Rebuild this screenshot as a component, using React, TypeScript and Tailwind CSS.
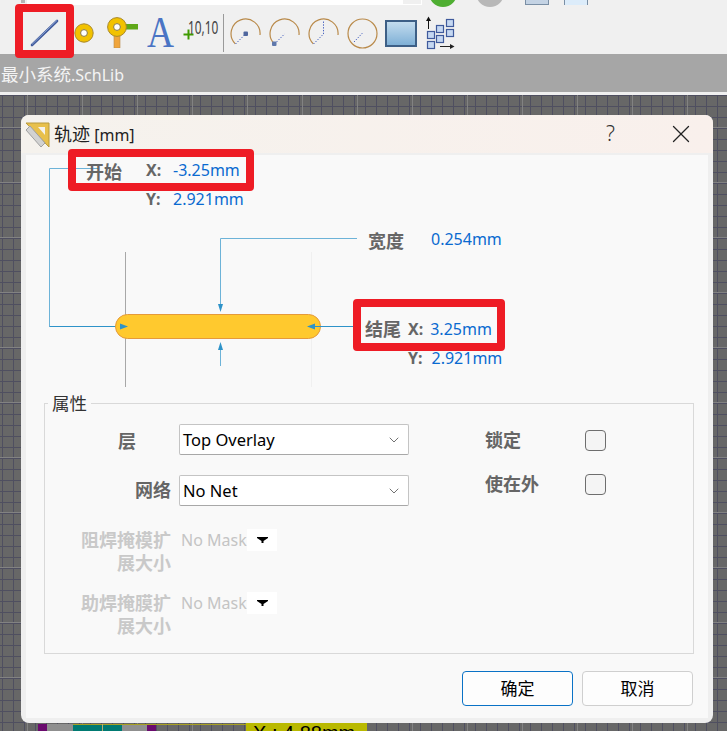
import { ChevronDown, X } from "lucide-react";

const FONT = "font-['Noto_Sans','Noto_Sans_CJK_SC',sans-serif]";

function LineIcon() {
  return (
    <svg width="30" height="30" viewBox="0 0 30 30">
      <line x1="2" y1="27" x2="27" y2="3" stroke="#3f5a9c" strokeWidth="2.6" strokeLinecap="round" />
      <line x1="2" y1="26.4" x2="27" y2="2.4" stroke="#9db2dc" strokeWidth="0.8" />
    </svg>
  );
}

function PadIcon() {
  return (
    <svg width="20" height="20" viewBox="0 0 20 20">
      <circle cx="10" cy="10" r="9.2" fill="#f2c200" stroke="#a8882c" strokeWidth="1" />
      <circle cx="10" cy="10" r="3.4" fill="#fff" stroke="#8a7a40" strokeWidth="1" />
    </svg>
  );
}

function ViaIcon() {
  return (
    <svg width="31" height="31" viewBox="0 0 31 31">
      <rect x="7" y="18" width="6" height="13" fill="#f0a53c" stroke="#b98a4a" strokeWidth="0.6" />
      <rect x="18" y="7" width="13" height="5.5" fill="#5fa818" />
      <circle cx="10" cy="10" r="9.4" fill="#f2c200" stroke="#a8882c" strokeWidth="1" />
      <circle cx="10" cy="10" r="3.4" fill="#fff" stroke="#8a7a40" strokeWidth="1" />
    </svg>
  );
}

function PlusIcon() {
  return (
    <svg width="11" height="11" viewBox="0 0 11 11">
      <path d="M5.5 0.5v10M0.5 5.5h10" stroke="#3f9a00" strokeWidth="2" />
    </svg>
  );
}

function ArcIcon({ kind }: { kind: 1 | 2 | 3 | 4 }) {
  return (
    <svg width="31" height="31" viewBox="0 0 31 31">
      {kind === 4 ? (
        <circle cx="15.5" cy="15.5" r="14.5" fill="none" stroke="#b98a4a" strokeWidth="1.2" />
      ) : (
        <path d="M5.3 25.8 A14.5 14.5 0 1 1 30 17" fill="none" stroke="#b98a4a" strokeWidth="1.2" />
      )}
      {kind === 1 && <path d="M5.5 26 L15.5 16" stroke="#4a64c0" strokeDasharray="1.4 1.4" />}
      {kind === 1 && <rect x="13.5" y="13.5" width="4.5" height="4.5" rx="1" fill="#4f669e" />}
      {kind === 2 && <path d="M5.5 26 L15.5 16" stroke="#4a64c0" strokeDasharray="1.4 1.4" />}
      {kind === 2 && <rect x="3" y="23.5" width="4.5" height="4.5" rx="1" fill="#5f78ac" />}
      {kind === 3 && <path d="M5.5 26 L15.5 16 V3" fill="none" stroke="#4a64c0" strokeDasharray="1.4 1.4" />}
      {kind === 4 && <path d="M7 24 L15.5 15" stroke="#4a64c0" strokeDasharray="1.4 1.4" />}
    </svg>
  );
}

function ArrayIcon() {
  const boxes = [
    [2, 15],
    [2, 25],
    [11, 9],
    [11, 19],
    [21, 3],
    [21, 13],
  ];
  return (
    <svg width="30" height="34" viewBox="0 0 30 34">
      {boxes.map(([x, y]) => (
        <rect key={`${x}-${y}`} x={x + 0.5} y={y + 0.5} width="7" height="7" fill="#c5d8f2" stroke="#3f5a9c" strokeWidth="1.2" />
      ))}
      <path d="M3.5 13V4" stroke="#111" strokeWidth="1" />
      <path d="M1 5L3.5 0.5 6 5z" fill="#111" />
      <path d="M15 30.5h11" stroke="#222" strokeWidth="1" />
      <path d="M25 28l4.5 2.5-4.5 2.5z" fill="#222" />
    </svg>
  );
}

function Toolbar() {
  return (
    <div className="flex h-[49px] items-center bg-[#f0f0f0] pl-[30px] pt-[7px]">
      <LineIcon />
      <div className="ml-[14px]"><PadIcon /></div>
      <div className="ml-[13px] -mt-[1px]"><ViaIcon /></div>
      <div className="ml-[9px] w-[29px] origin-left scale-x-[0.85] text-[44px] leading-[36px] text-[#4a74c4] font-['Liberation_Serif',serif]">A</div>
      <div className="relative ml-[7px] flex h-[32px] w-[35px]">
        <span className="absolute left-[0px] top-[12px]"><PlusIcon /></span>
        <span className={`absolute left-[5px] top-[0px] origin-left scale-x-[0.66] text-[18px] leading-[20px] text-[#444] ${FONT}`}>10,10</span>
      </div>
      <div className="ml-[5px] -mt-[1px] h-[38px] w-[1px] bg-[#9a9a9a]" />
      <div className="ml-[6px] flex gap-[8px]">
        <ArcIcon kind={1} />
        <ArcIcon kind={2} />
        <ArcIcon kind={3} />
        <ArcIcon kind={4} />
      </div>
      <div className="ml-[7px] h-[27px] w-[32px] border-2 border-[#3d5f86] bg-gradient-to-b from-[#c3dcee] to-[#7fb0d6]" />
      <div className="ml-[8px]"><ArrayIcon /></div>
    </div>
  );
}

function Legend({ k, v }: { k: string; v: string }) {
  return (
    <>
      <span className="font-bold text-[#666]">{k}</span>
      <span className="text-[#0a6ad0]">{v}</span>
    </>
  );
}

function Diagram() {
  return (
    <div className="relative h-[248px] text-[16px] leading-[20px]">
      {/* leader lines and the track drawing */}
      <svg className="absolute left-0 top-0" width="683" height="248" viewBox="0 0 683 248">
        <path d="M72 13.5H23.5V171.5H92" fill="none" stroke="#6db3d8" strokeWidth="1" />
        <path d="M23.5 171.5H100" fill="none" stroke="#2e93c9" strokeWidth="1" />
        <line x1="99.5" y1="97" x2="99.5" y2="232" stroke="#a8a8a8" />
        <line x1="285.5" y1="97" x2="285.5" y2="232" stroke="#f0f0f0" />
        <rect x="89.5" y="159.5" width="205" height="24" rx="12" fill="#ffc92e" stroke="#e59a3a" />
        <path d="M330 171.5H285" stroke="#2e93c9" />
        <path d="M331 83.5H194.5V152" fill="none" stroke="#6db3d8" />
        <path d="M194.5 190V211" stroke="#6db3d8" />
        <path d="M102 171.5l-8-3v6z M281 171.5l8-3v6z M194.5 157l-2.5-8h5z M194.5 187l-2.5 8h5z" fill="#2e93c9" />
      </svg>

      <span className="absolute left-[60px] top-[7px] text-[18px] font-bold text-[#666]">开始</span>
      <div className="absolute left-[120px] top-[5px] grid grid-cols-[27px_auto] gap-y-[9px]">
        <Legend k="X:" v="-3.25mm" />
        <Legend k="Y:" v="2.921mm" />
      </div>

      <span className="absolute left-[342px] top-[76px] text-[18px] font-bold text-[#666]">宽度</span>
      <span className="absolute left-[405px] top-[74px] text-[#0a6ad0]">0.254mm</span>

      <span className="absolute left-[339px] top-[164px] text-[18px] font-bold text-[#666]">结尾</span>
      <div className="absolute left-[382px] top-[164px] flex gap-[7px]">
        <Legend k="X:" v="3.25mm" />
      </div>
      <div className="absolute left-[382px] top-[193px] flex gap-[9px]">
        <Legend k="Y:" v="2.921mm" />
      </div>
    </div>
  );
}

function Select({ value }: { value: string }) {
  return (
    <div className="flex h-[31px] w-[230px] items-center justify-between rounded-[2px] border border-[#c4c4c4] border-b-[#a8a8a8] bg-white pl-[3px] pr-[6px] text-[16.5px] text-black">
      <span className="pt-[2px]">{value}</span>
      <ChevronDown className="h-[16px] w-[16px] text-[#555]" strokeWidth={1.25} />
    </div>
  );
}

function MaskRow({ line1, line2 }: { line1: string; line2: string }) {
  return (
    <div className="flex h-[63px] items-start">
      <div className="w-[126px] text-right text-[18px] font-bold leading-[23px] text-[#c9c9c9]">
        {line1}
        <br />
        {line2}
      </div>
      <span className="ml-[10px] w-[66px] whitespace-nowrap text-[16px] leading-[23px] text-[#c4c4c4]">No Mask</span>
      <div className="flex h-[22px] w-[30px] items-center justify-center bg-white">
        <svg width="11" height="6" viewBox="0 0 11 6">
          <path d="M0 0h11v1L6.5 4v2h-2V4L0 1z" fill="#000" />
        </svg>
      </div>
    </div>
  );
}

function Properties() {
  return (
    <div className="relative mx-[18px] h-[251px] w-[650px] border border-[#d9d9d9]">
      <span className="absolute left-[3px] top-[-11px] bg-[#f9f9f9] px-[4px] text-[17.5px] leading-[20px] text-[#333]">属性</span>
      <div className="flex pt-[20px]">
        <div className="w-[365px]">
          <div className="flex h-[31px] items-center">
            <span className="w-[126px] pr-[35px] pt-[4px] text-right text-[18px] font-bold text-[#666]">层</span>
            <div className="ml-[8px]"><Select value="Top Overlay" /></div>
          </div>
          <div className="mt-[20px] flex h-[31px] items-center">
            <span className="w-[126px] text-right text-[18px] font-bold text-[#666]">网络</span>
            <div className="ml-[8px]"><Select value="No Net" /></div>
          </div>
          <div className="mt-[23px]">
            <MaskRow line1="阻焊掩模扩" line2="展大小" />
            <MaskRow line1="助焊掩膜扩" line2="展大小" />
          </div>
        </div>
        <div className="ml-[75px] mt-[5px] flex flex-col gap-[22px] text-[18px] font-bold text-[#666]">
          <div className="flex h-[22px] w-[121px] items-center justify-between">
            <span>锁定</span>
            <div className="h-[21px] w-[21px] rounded-[4px] border border-[#6e6e6e] bg-[#f4f4f4]" />
          </div>
          <div className="flex h-[22px] w-[121px] items-center justify-between">
            <span>使在外</span>
            <div className="h-[21px] w-[21px] rounded-[4px] border border-[#6e6e6e] bg-[#f4f4f4]" />
          </div>
        </div>
      </div>
    </div>
  );
}

function Dialog() {
  return (
    <div className={`relative flex h-[608px] w-[692px] flex-col overflow-hidden rounded-[8px] bg-[#efefef] ${FONT}`}>
      <div className="flex h-[38px] items-center bg-gradient-to-r from-[#f5f2ed] to-[#f9f0ec] pl-[4px]">
        <svg width="26" height="26" viewBox="0 0 26 26">
          <path d="M1 2H24V26Z" fill="#e8c04c" stroke="#b89a3c" />
          <path d="M13 6H20V14Z" fill="#f5f2ed" />
          <path d="M1 9L5 5 20 22 16 26z" fill="#d2d2d2" stroke="#a0a0a0" />
        </svg>
        <span className="ml-[3px] text-[16px] text-[#222]">
          <span className="text-[18px]">轨迹</span> [mm]
        </span>
        <span className="ml-auto text-[21px] font-light text-[#333]">?</span>
        <X className="ml-[51px] mr-[17px] h-[30px] w-[30px] text-[#222]" strokeWidth={1} />
      </div>
      <div className="mx-[5px] mb-[5px] mt-[2px] flex-1 bg-[#f9f9f9]">
        <Diagram />
        <Properties />
        <div className="mr-[15px] mt-[17px] flex justify-end gap-[9px] text-[17px] text-black">
          <div className="flex h-[35px] w-[111px] items-center justify-center rounded-[4px] border border-[#0a72c6] bg-[#fdfdfd]">确定</div>
          <div className="flex h-[35px] w-[111px] items-center justify-center rounded-[4px] border border-[#cfcfcf] bg-[#fdfdfd]">取消</div>
        </div>
      </div>
    </div>
  );
}

export default function App() {
  return (
    <div className="relative flex h-[731px] w-[727px] flex-col overflow-hidden bg-[#f0f0f0]">
      {/* cut-off top row of the previous toolbar */}
      <div className="flex h-[5px] items-start">
        <div className="ml-[21px] h-[3px] w-[4px] bg-[#b5b5b5]" />
        <div className="ml-[2px] h-[5px] w-[376px] bg-white" />
        <div className="h-[5px] w-[19px] border-r border-b border-white bg-[#f0f0f0]" />
        <div className="relative z-10 ml-[7px] h-[7px] w-[28px] overflow-hidden">
          <div className="-mt-[23px] h-[30px] w-[28px] rounded-full bg-[#4fae32]" />
        </div>
        <div className="relative z-10 ml-[19px] h-[7px] w-[28px] overflow-hidden">
          <div className="-mt-[23px] h-[30px] w-[28px] rounded-full bg-[#b8b8b8]" />
        </div>
        <div className="ml-[21px] h-[5px] w-[24px] border border-t-0 border-[#7a8fa5] bg-[#c4d3e4]" />
        <div className="ml-[15px] h-[6px] w-[24px] border border-t-0 border-[#7a8fa5] bg-[#dcecfa]" />
      </div>
      <Toolbar />
      <div className={`flex h-[38px] items-center bg-[#a6a6a6] pl-[1px] pt-[3px] text-[16px] text-[#f4f4f4] ${FONT}`}>
        <span className="text-[17.5px]">最小系统</span>.SchLib
      </div>
      <div className="h-[3px] bg-[#f0f0f0]" />

      {/* schematic canvas behind the dialog */}
      <div className="relative flex-1 bg-[#676767] bg-[linear-gradient(to_right,#828282_1px,transparent_1px),linear-gradient(to_bottom,#828282_1px,transparent_1px),linear-gradient(to_right,#4f4f60_1px,transparent_1px),linear-gradient(to_bottom,#4f4f60_1px,transparent_1px)] bg-[size:55px_55px,55px_55px,11px_11px,11px_11px] bg-[position:27px_32px,27px_32px,2px_0px,2px_0px] pl-[21px] pt-[20px]">
        <Dialog />
        <div className="absolute left-[62px] top-[629px] h-[1px] w-[184px] bg-[#a8a020]" />
        <div className="absolute left-[38px] top-[629px] flex h-[7px] items-stretch">
          <div className="w-[9px] bg-[#6a0a6e]" />
          <div className="w-[26px] bg-[#8f8f8f]" />
          <div className="mt-[1px] w-[29px] bg-[#007a72]" />
          <div className="w-[1px] bg-[#b8ae70]" />
          <div className="mt-[1px] w-[19px] bg-[#007a72]" />
          <div className="mt-[1px] w-[25px] bg-[#8f8f8f]" />
          <div className="mt-[1px] w-[9px] bg-[#6a0a6e]" />
        </div>
        <div className="absolute left-[246px] top-[628px] h-[8px] w-[121px] overflow-hidden whitespace-nowrap bg-[#b9b900] pl-[7px] text-[20px] leading-[20px] text-black font-['Liberation_Sans',sans-serif]">
          X : 4.88mm
        </div>
      </div>

      {/* red annotation boxes */}
      <div className="absolute left-[15px] top-[4px] h-[54px] w-[59px] rounded-[4px] border-[8px] border-[#ee1c25]" />
      <div className="absolute left-[68px] top-[149px] h-[42px] w-[186px] rounded-[4px] border-[8px] border-[#ee1c25]" />
      <div className="absolute left-[353px] top-[299px] h-[52px] w-[152px] rounded-[4px] border-[8px] border-[#ee1c25]" />
    </div>
  );
}
